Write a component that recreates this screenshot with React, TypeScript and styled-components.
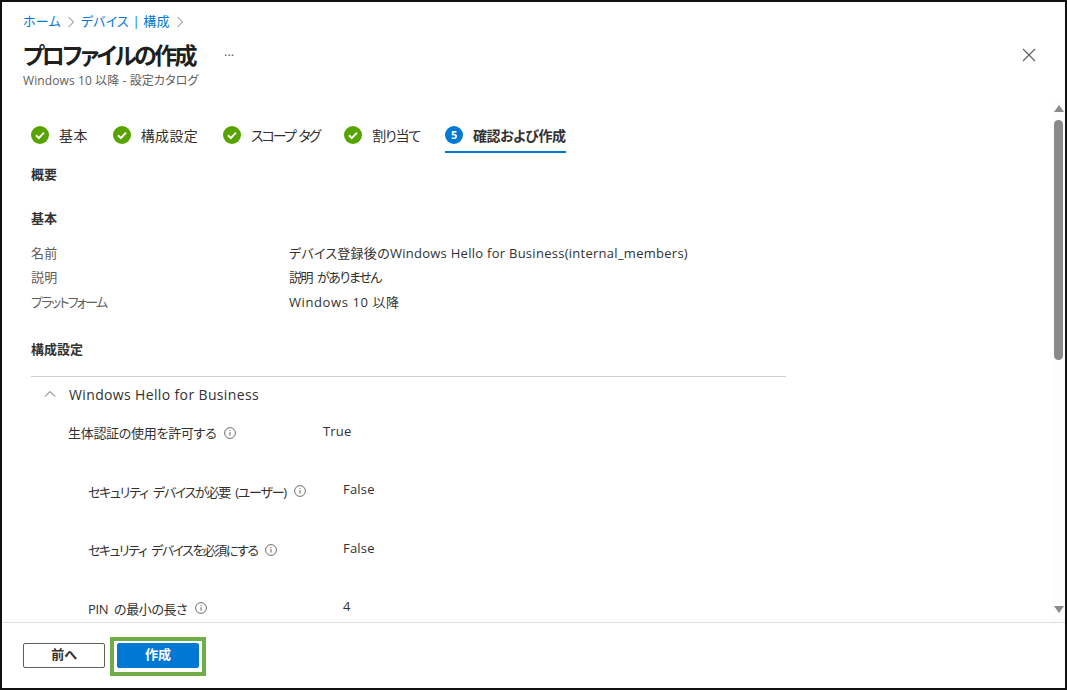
import React from 'react';
import styled, { createGlobalStyle } from 'styled-components';

const GlobalStyle = createGlobalStyle`
  html, body {
    margin: 0;
    padding: 0;
    background: #fff;
  }
  body {
    font-family: "Open Sans", "Noto Sans CJK JP", sans-serif;
    font-feature-settings: "palt";
    color: #323130;
  }
`;

// tracking: the original face has narrower kana than Noto, so each string is fitted on its own
const steps = [
  { label: '基本', tracking: 0.4 },
  { label: '構成設定', tracking: 0.3 },
  { label: 'スコープ タグ', tracking: -2 },
  { label: '割り当て', tracking: -1.2 },
];

const summaryRows = [
  { label: '名前', labelTracking: 0.2, value: 'デバイス登録後のWindows Hello for Business(internal_members)', tracking: 0.27, wordGap: 0 },
  { label: '説明', labelTracking: 0.2, value: '説明 がありません', tracking: -1.45, wordGap: 3 },
  { label: 'プラットフォーム', labelTracking: -1.7, value: 'Windows 10 以降', tracking: 0.6, wordGap: 0 },
];

const settings = [
  { label: '生体認証の使用を許可する', value: 'True', nested: false, tracking: -0.3 },
  { label: 'セキュリティ デバイスが必要 (ユーザー)', value: 'False', nested: true, tracking: -1.25 },
  { label: 'セキュリティ デバイスを必須にする', value: 'False', nested: true, tracking: -1.5 },
  { label: 'PIN の最小の長さ', value: '4', nested: true, tracking: -0.4 },
];

const CheckIcon = () => (
  <svg width="18" height="18" viewBox="0 0 18 18">
    <circle cx="9" cy="9" r="9" fill="#57a300" />
    <path d="M5 9.3l2.8 2.8L13 6.6" fill="none" stroke="#fff" strokeWidth="2" />
  </svg>
);

const InfoIcon = () => (
  <svg width="12" height="12" viewBox="0 0 12 12">
    <circle cx="6" cy="6" r="5.4" fill="none" stroke="#605e5c" strokeWidth="0.9" />
    <path d="M6 5.2v3.4M6 3.2v1" fill="none" stroke="#605e5c" strokeWidth="1" />
  </svg>
);

const App = () => {
  return (
    <>
      <GlobalStyle />
      <Frame>
        <Header>
          <Breadcrumb>
            <a>ホーム</a>
            <Chevron viewBox="0 0 8 12"><path d="M1.5 1l5 5-5 5" /></Chevron>
            <a>デバイス | 構成</a>
            <Chevron viewBox="0 0 8 12"><path d="M1.5 1l5 5-5 5" /></Chevron>
          </Breadcrumb>
          <TitleRow>
            <Title>プロファイルの作成</Title>
            <More>···</More>
            <Close width="14" height="14" viewBox="0 0 14 14">
              <path d="M1 1l12 12M13 1L1 13" />
            </Close>
          </TitleRow>
          <Subtitle>Windows 10 以降 - 設定カタログ</Subtitle>
        </Header>

        <Body>
          <Content>
            <Stepper>
              {steps.map(step => (
                <Step key={step.label} $tracking={step.tracking}>
                  <CheckIcon />
                  {step.label}
                </Step>
              ))}
              <ActiveStep $tracking={-0.45}>
                <StepNumber>5</StepNumber>
                確認および作成
              </ActiveStep>
            </Stepper>

            <Overview>概要</Overview>
            <SectionTitle>基本</SectionTitle>
            {summaryRows.map(row => (
              <SummaryRow key={row.label}>
                <SummaryLabel $tracking={row.labelTracking}>{row.label}</SummaryLabel>
                <SummaryValue $tracking={row.tracking} $wordGap={row.wordGap}>{row.value}</SummaryValue>
              </SummaryRow>
            ))}

            <ConfigTitle>構成設定</ConfigTitle>
            <Accordion>
              <AccordionHead>
                <svg width="12" height="8" viewBox="0 0 12 8" fill="none" stroke="#605e5c">
                  <path d="M1 6.5l5-5 5 5" />
                </svg>
                Windows Hello for Business
              </AccordionHead>
              {settings.map(item => (
                <SettingRow key={item.label} $nested={item.nested}>
                  <SettingLabel>
                    <LabelText $tracking={item.tracking}>{item.label}</LabelText>
                    <InfoIcon />
                  </SettingLabel>
                  <SettingValue>{item.value}</SettingValue>
                </SettingRow>
              ))}
            </Accordion>
          </Content>

          <ScrollBar>
            <svg width="10" height="7" viewBox="0 0 10 7"><path d="M5 0l5 7H0z" fill="#8a8a8a" /></svg>
            <Thumb />
            <Spacer />
            <svg width="10" height="7" viewBox="0 0 10 7"><path d="M0 0h10L5 7z" fill="#8a8a8a" /></svg>
          </ScrollBar>
        </Body>

        <Footer>
          <PrevButton>前へ</PrevButton>
          <Highlight>
            <PrimaryButton>作成</PrimaryButton>
          </Highlight>
        </Footer>
      </Frame>
    </>
  );
};

export default App;

const Frame = styled.div`
  box-sizing: border-box;
  width: 1067px;
  height: 690px;
  border: 2px solid #111;
  display: flex;
  flex-direction: column;
  overflow: hidden;
`;

const Header = styled.header`
  height: 98px;
  flex: none;
  padding: 11px 21px 0;
  box-sizing: border-box;
`;

const Breadcrumb = styled.nav`
  display: flex;
  align-items: center;
  gap: 6px;
  height: 17px;
  font-size: 13px;
  line-height: 17px;
  letter-spacing: 0.2px;
  color: #0078d4;
`;

const Chevron = styled.svg`
  width: 8px;
  height: 12px;
  fill: none;
  stroke: #7a7a7a;
`;

const TitleRow = styled.div`
  display: flex;
  align-items: center;
  height: 36px;
  margin-top: 7px;
`;

const Title = styled.h1`
  margin: -2px 0 0;
  font-size: 23px;
  font-weight: 700;
  letter-spacing: -2.6px;
  color: #201f1e;
`;

const More = styled.span`
  margin-left: 29px;
  font-size: 13px;
  color: #605e5c;
`;

const Close = styled.svg`
  margin-left: auto;
  margin-right: 8px;
  fill: none;
  stroke: #605e5c;
  stroke-width: 1.1;
`;

const Subtitle = styled.div`
  font-size: 12px;
  line-height: 16px;
  letter-spacing: 0.1px;
  color: #605e5c;
`;

const Body = styled.main`
  flex: 1;
  min-height: 0;
  display: flex;
`;

const Content = styled.div`
  flex: 1;
  min-width: 0;
  padding-left: 29px;
  overflow: hidden;
`;

const Stepper = styled.div`
  display: flex;
  align-items: stretch;
  gap: 25px;
  height: 36px;
  margin-top: 17px;
`;

const Step = styled.div<{ $tracking: number }>`
  display: flex;
  align-items: center;
  gap: 10px;
  font-size: 14px;
  letter-spacing: ${props => props.$tracking}px;
  word-spacing: 2px;
  color: #323130;
  padding-bottom: 1px;
  box-sizing: border-box;
`;

const ActiveStep = styled(Step)`
  font-weight: 700;
  border-bottom: 2px solid #0078d4;
  padding: 1px 0 0;
  gap: 10px;
`;

const StepNumber = styled.span`
  width: 18px;
  height: 18px;
  border-radius: 50%;
  background: #0078d4;
  color: #fff;
  font-size: 11px;
  font-weight: 700;
  letter-spacing: 0;
  display: flex;
  align-items: center;
  justify-content: center;
`;

const Overview = styled.div`
  margin-top: 11px;
  font-size: 13px;
  line-height: 20px;
  font-weight: 700;
`;

const SectionTitle = styled(Overview)`
  margin-top: 24px;
  margin-bottom: 12px;
`;

const SummaryRow = styled.div`
  display: flex;
  height: 24.5px;
  align-items: center;
  font-size: 13px;
`;

const SummaryLabel = styled.span<{ $tracking: number }>`
  width: 258px;
  letter-spacing: ${props => props.$tracking}px;
  color: #605e5c;
`;

const SummaryValue = styled.span<{ $tracking: number; $wordGap: number }>`
  letter-spacing: ${props => props.$tracking}px;
  word-spacing: ${props => props.$wordGap}px;
`;

const ConfigTitle = styled(Overview)`
  margin-top: 25px;
`;

const Accordion = styled.section`
  width: 755px;
  margin-top: 17px;
  border-top: 1px solid #d2d0ce;
`;

const AccordionHead = styled.div`
  display: flex;
  align-items: center;
  gap: 13px;
  height: 37px;
  padding: 0 0 2px 13px;
  box-sizing: border-box;
  font-size: 14px;
  letter-spacing: 0.36px;
  color: #323130;
`;

const SettingRow = styled.div<{ $nested: boolean }>`
  display: flex;
  height: 58.5px;
  padding-left: ${props => (props.$nested ? '57px' : '37px')};
  font-size: 13px;
`;

const SettingLabel = styled.div`
  display: flex;
  align-items: center;
  gap: 8px;
  width: 255px;
  height: 24px;
  margin-top: 7px;
`;

const LabelText = styled.span<{ $tracking: number }>`
  letter-spacing: ${props => props.$tracking}px;
  word-spacing: 3px;
`;

const SettingValue = styled.div`
  line-height: 20px;
  letter-spacing: 0.2px;
  margin-top: 7px;
`;

const ScrollBar = styled.div`
  width: 13px;
  flex: none;
  display: flex;
  flex-direction: column;
  align-items: center;
  padding: 5px 0 9px;
  box-sizing: border-box;
  background: #fdfdfd;
`;

const Thumb = styled.div`
  width: 9px;
  height: 240px;
  margin-top: 8px;
  border-radius: 5px;
  background: #8a8a8a;
`;

const Spacer = styled.div`
  flex: 1;
`;

const Footer = styled.footer`
  height: 66px;
  flex: none;
  display: flex;
  align-items: flex-start;
  gap: 5px;
  padding: 14px 0 0 21px;
  box-sizing: border-box;
  border-top: 1px solid #e1dfdd;
`;

const SecondaryButton = styled.button`
  width: 82px;
  height: 25px;
  padding: 0 0 4px;
  border: 1px solid #605e5c;
  border-radius: 2px;
  background: #fff;
  font: 700 13px "Open Sans", "Noto Sans CJK JP", sans-serif;
  font-feature-settings: "palt";
  color: #323130;
`;

const PrevButton = styled(SecondaryButton)`
  margin-top: 6px;
`;

const PrimaryButton = styled(SecondaryButton)`
  border-color: #0078d4;
  background: #0078d4;
  color: #fff;
`;

const Highlight = styled.div`
  display: flex;
  padding: 2px 3px 4px;
  border: 4px solid #70ad47;
`;
